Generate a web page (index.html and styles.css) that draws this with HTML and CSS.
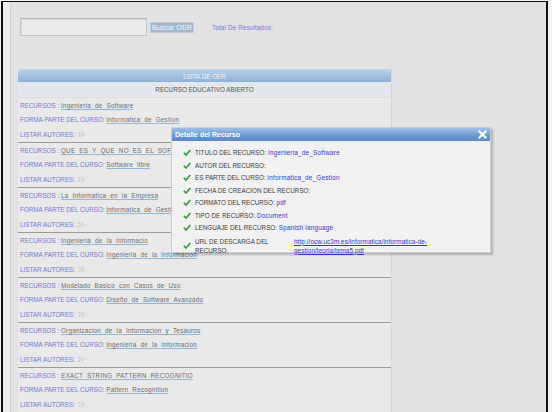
FILE: index.html
```html
<!DOCTYPE html>
<html>
<head>
<meta charset="utf-8">
<link rel="stylesheet" href="styles.css">
</head>
<body>
<div class="frame">
  <div class="page">
    <div class="search">
      <input class="q" type="text">
      <span class="btn">Buscar OER</span>
      <span class="total">Total De Resultados:</span>
    </div>
    <div class="list">
      <div class="list-head">LISTA DE OER</div>
      <div class="list-sub">RECURSO EDUCATIVO ABIERTO</div>

      <div class="rec">
        <div class="row r1"><span class="lbl">RECURSOS :</span> <a class="lnk">Ingenieria de Software</a></div>
        <div class="row r2"><span class="lbl">FORMA PARTE DEL CURSO:</span> <a class="lnk">Informatica de Gestion</a></div>
        <div class="row r3"><span class="lbl">LISTAR AUTORES:</span> <svg class="chev" width="8" height="7" viewBox="0 0 8 7"><polyline points="1,0.8 3.6,3.5 1,6.2"/><polyline points="4.3,0.8 6.9,3.5 4.3,6.2"/></svg></div>
      </div>
      <div class="rec">
        <div class="row r1"><span class="lbl">RECURSOS :</span> <a class="lnk">QUE ES Y QUE NO ES EL SOFTWARE LIBRE</a></div>
        <div class="row r2"><span class="lbl">FORMA PARTE DEL CURSO:</span> <a class="lnk">Software libre</a></div>
        <div class="row r3"><span class="lbl">LISTAR AUTORES:</span> <svg class="chev" width="8" height="7" viewBox="0 0 8 7"><polyline points="1,0.8 3.6,3.5 1,6.2"/><polyline points="4.3,0.8 6.9,3.5 4.3,6.2"/></svg></div>
      </div>
      <div class="rec">
        <div class="row r1"><span class="lbl">RECURSOS :</span> <a class="lnk">La Informatica en la Empresa</a></div>
        <div class="row r2"><span class="lbl">FORMA PARTE DEL CURSO:</span> <a class="lnk">Informatica de Gestion</a></div>
        <div class="row r3"><span class="lbl">LISTAR AUTORES:</span> <svg class="chev" width="8" height="7" viewBox="0 0 8 7"><polyline points="1,0.8 3.6,3.5 1,6.2"/><polyline points="4.3,0.8 6.9,3.5 4.3,6.2"/></svg></div>
      </div>
      <div class="rec">
        <div class="row r1"><span class="lbl">RECURSOS :</span> <a class="lnk">Ingenieria de la Informacio</a></div>
        <div class="row r2"><span class="lbl">FORMA PARTE DEL CURSO:</span> <a class="lnk">Ingenieria de la Informacion</a></div>
        <div class="row r3"><span class="lbl">LISTAR AUTORES:</span> <svg class="chev" width="8" height="7" viewBox="0 0 8 7"><polyline points="1,0.8 3.6,3.5 1,6.2"/><polyline points="4.3,0.8 6.9,3.5 4.3,6.2"/></svg></div>
      </div>
      <div class="rec">
        <div class="row r1"><span class="lbl">RECURSOS :</span> <a class="lnk">Modelado Basico con Casos de Uso</a></div>
        <div class="row r2"><span class="lbl">FORMA PARTE DEL CURSO:</span> <a class="lnk">Diseño de Software Avanzado</a></div>
        <div class="row r3"><span class="lbl">LISTAR AUTORES:</span> <svg class="chev" width="8" height="7" viewBox="0 0 8 7"><polyline points="1,0.8 3.6,3.5 1,6.2"/><polyline points="4.3,0.8 6.9,3.5 4.3,6.2"/></svg></div>
      </div>
      <div class="rec">
        <div class="row r1"><span class="lbl">RECURSOS :</span> <a class="lnk">Organizacion de la Informacion y Tesauros</a></div>
        <div class="row r2"><span class="lbl">FORMA PARTE DEL CURSO:</span> <a class="lnk">Ingenieria de la Informacion</a></div>
        <div class="row r3"><span class="lbl">LISTAR AUTORES:</span> <svg class="chev" width="8" height="7" viewBox="0 0 8 7"><polyline points="1,0.8 3.6,3.5 1,6.2"/><polyline points="4.3,0.8 6.9,3.5 4.3,6.2"/></svg></div>
      </div>
      <div class="rec">
        <div class="row r1"><span class="lbl">RECURSOS :</span> <a class="lnk">EXACT STRING PATTERN RECOGNITIO</a></div>
        <div class="row r2"><span class="lbl">FORMA PARTE DEL CURSO:</span> <a class="lnk">Pattern Recognition</a></div>
        <div class="row r3"><span class="lbl">LISTAR AUTORES:</span> <svg class="chev" width="8" height="7" viewBox="0 0 8 7"><polyline points="1,0.8 3.6,3.5 1,6.2"/><polyline points="4.3,0.8 6.9,3.5 4.3,6.2"/></svg></div>
      </div>
    </div>
  </div>

  <div class="dialog">
    <div class="dlg-title">
      <span>Detalle del Recurso</span>
      <svg class="close" width="9" height="9" viewBox="0 0 9 9"><path d="M1.5 1.5 L7.5 7.5 M7.5 1.5 L1.5 7.5"/></svg>
    </div>
    <div class="dlg-body">
      <div class="item"><svg class="ok" width="8" height="7" viewBox="0 0 8 7"><path d="M0.8 3.8 L3 6 L7.3 0.9"/></svg><span class="k">TITULO DEL RECURSO:</span> <span class="v">Ingenieria_de_Software</span></div>
      <div class="item"><svg class="ok" width="8" height="7" viewBox="0 0 8 7"><path d="M0.8 3.8 L3 6 L7.3 0.9"/></svg><span class="k">AUTOR DEL RECURSO:</span></div>
      <div class="item"><svg class="ok" width="8" height="7" viewBox="0 0 8 7"><path d="M0.8 3.8 L3 6 L7.3 0.9"/></svg><span class="k">ES PARTE DEL CURSO:</span> <span class="v">Informatica_de_Gestion</span></div>
      <div class="item"><svg class="ok" width="8" height="7" viewBox="0 0 8 7"><path d="M0.8 3.8 L3 6 L7.3 0.9"/></svg><span class="k">FECHA DE CREACION DEL RECURSO:</span></div>
      <div class="item"><svg class="ok" width="8" height="7" viewBox="0 0 8 7"><path d="M0.8 3.8 L3 6 L7.3 0.9"/></svg><span class="k">FORMATO DEL RECURSO:</span> <span class="v">pdf</span></div>
      <div class="item"><svg class="ok" width="8" height="7" viewBox="0 0 8 7"><path d="M0.8 3.8 L3 6 L7.3 0.9"/></svg><span class="k">TIPO DE RECURSO:</span> <span class="v">Document</span></div>
      <div class="item"><svg class="ok" width="8" height="7" viewBox="0 0 8 7"><path d="M0.8 3.8 L3 6 L7.3 0.9"/></svg><span class="k">LENGUAJE DEL RECURSO:</span> <span class="v">Spanish language</span></div>
      <div class="url-item"><svg class="ok" width="8" height="7" viewBox="0 0 8 7"><path d="M0.8 3.8 L3 6 L7.3 0.9"/></svg><span class="k url-k">URL DE DESCARGA DEL<br>RECURSO:</span><a class="url">http://ocw.uc3m.es/informatica/informatica-de-<br>gestion/teoria/tema5.pdf</a></div>
    </div>
  </div>
</div>
</body>
</html>
```

FILE: styles.css
```css
* { box-sizing: border-box; }
html, body { margin: 0; padding: 0; }
body {
  background: #f3f3f3;
  font-family: "Liberation Sans", Arial, sans-serif;
  font-size: 6.3px;
  width: 552px;
  height: 412px;
  overflow: hidden;
}
.frame {
  position: relative;
  margin: 1px 0 0 1px;
  width: 547px;
  height: 411px;
  border-left: 2px solid #111;
  border-right: 2px solid #111;
  border-top: 1px solid #111;
  background: #eeeeee;
  padding-left: 7px;
}
.page {
  height: 100%;
  background: #e2e2e2;
  border-left: 1px solid #d2d2d2;
  padding-left: 7px;
  padding-top: 16px;
}
.search {
  display: flex;
  align-items: center;
  height: 18px;
}
.q {
  margin: 0 0 0 2px;
  width: 127px;
  height: 18px;
  padding: 0;
  border: 1px solid #c4c4c4;
  border-top-color: #b4b4b4;
  background: #ebebeb;
  box-shadow: inset 1px 1px 1px #d6d6d6;
}
.btn {
  margin-left: 3px;
  height: 11px;
  line-height: 10px;
  padding: 0 1px;
  background: #a5b6cb;
  color: #f4f7fb;
  font-size: 7.2px;
  border: 1px solid #c3cedb;
}
.total {
  margin-left: 18px;
  color: #7b7be0;
  font-size: 6.6px;
}
.list {
  margin-top: 33px;
  width: 374px;
  background: #e9e9e9;
  border-right: 1px solid #d8d8d8;
}
.list-head {
  height: 13px;
  line-height: 13px;
  text-align: center;
  color: #eef3f9;
  background: linear-gradient(#b8cfe7, #8fb0d6);
  border-top: 1px solid #c5d6ea;
}
.list-sub {
  height: 16px;
  line-height: 15px;
  text-align: center;
  color: #555;
  background: #e4e7eb;
  border-bottom: 1px solid #dadde1;
}
.rec {
  border-bottom: 1px solid #999;
  padding-left: 2px;
}
.row {
  white-space: nowrap;
  overflow: hidden;
}
.r1 { height: 14px; line-height: 15px; }
.r2 { height: 15px; line-height: 15px; }
.r3 { height: 15px; line-height: 16px; }
.lbl { color: #7676d6; }
.lnk {
  color: #6c6c6c;
  text-decoration: underline;
  text-decoration-color: #8fb7dc;
  text-underline-offset: 1px;
  letter-spacing: 0.25px;
  word-spacing: 2px;
}
.chev {
  vertical-align: -1px;
  fill: none;
  stroke: #b9b9b9;
  stroke-width: 0.9;
}
.dialog {
  position: absolute;
  left: 168px;
  top: 125px;
  width: 320px;
  height: 126px;
  background: #f1f1f1;
  border: 1px solid #c9ced6;
  box-shadow: 2px 2px 2px rgba(0,0,0,0.22);
  z-index: 5;
}
.dlg-title {
  height: 13px;
  display: flex;
  align-items: center;
  justify-content: space-between;
  padding: 0 3px 0 3px;
  background: linear-gradient(#9fc1e8, #6a97d1 60%, #5b8acb);
  color: #fff;
  font-weight: bold;
  font-size: 7px;
}
.close {
  fill: none;
  stroke: #fff;
  stroke-width: 2.2;
  stroke-linecap: square;
}
.dlg-body {
  padding-top: 6px;
  padding-left: 11px;
}
.item {
  height: 12.5px;
  line-height: 12.5px;
  white-space: nowrap;
}
.ok {
  margin-right: 4px;
  vertical-align: -1px;
  fill: none;
  stroke: #2f9a2f;
  stroke-width: 1.6;
}
.k { color: #3c3c3c; }
.v { color: #3535d0; letter-spacing: 0.25px; }
.url-item {
  display: flex;
  align-items: center;
  padding-top: 2px;
  line-height: 9px;
  white-space: nowrap;
}
.url-k { width: 99px; }
.url {
  color: #3535d0;
  text-decoration: underline;
  letter-spacing: 0.1px;
}
```
